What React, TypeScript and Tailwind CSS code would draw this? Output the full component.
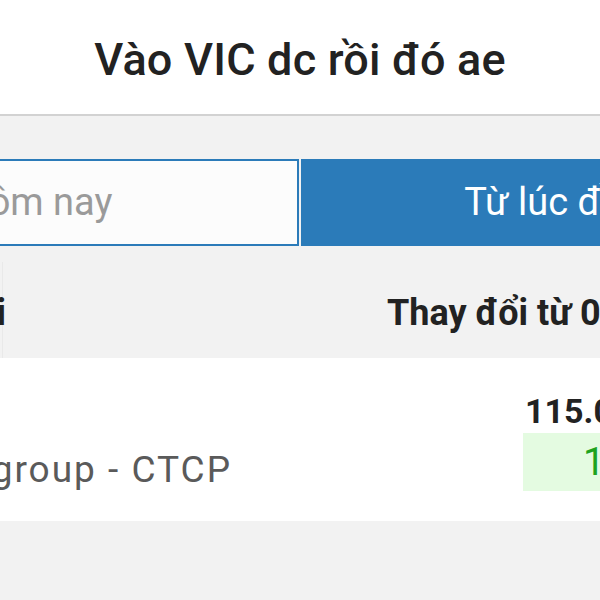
export default function App() {
  return (
    <div className="w-[600px] h-[600px] overflow-hidden bg-[#f2f2f2] font-['Roboto',sans-serif]">
      {/* Title bar */}
      <div className="h-[116px] box-border bg-white flex items-center justify-center border-b-2 border-[#d2d2d2] pt-[6px]">
        <h1 className="text-[45px] font-medium text-[#222] tracking-[0.2px] whitespace-nowrap">Vào VIC dc rồi đó ae</h1>
      </div>

      {/* Tabs */}
      <div className="pt-[43px]">
        <div className="flex -mx-[211px] gap-[2px] h-[87px]">
          <div className="flex-1 bg-[#fcfcfc] border-2 border-[#2b7bb9] flex items-center justify-center pr-[14px] text-[38px] text-[#9a9a9a] whitespace-nowrap">
            Hôm nay
          </div>
          <div className="flex-1 bg-[#2b7bb9] border-2 border-[#2b7bb9] flex items-center justify-center pl-[4px] pr-[10px] text-[38px] text-white whitespace-nowrap">
            Từ lúc đầu
          </div>
        </div>
      </div>

      {/* Table header */}
      <div className="mt-[16px] ml-[2px] border-l border-[#e9e9e9]">
        <div className="h-[96px] flex items-center justify-between pt-[6px] whitespace-nowrap">
          <div className="w-[3px] flex justify-end">
            <span className="text-[36px] font-bold text-[#222]">Hiện tại</span>
          </div>
          <span className="text-[36px] font-bold text-[#222] -mr-[76px]">Thay đổi từ 01/01</span>
        </div>
      </div>

      {/* Row */}
      <div className="h-[163px] bg-white flex">
        <div className="flex-1 flex justify-end items-end pb-[33px] pr-[291px] whitespace-nowrap overflow-hidden">
          <div className="flex flex-col items-start shrink-0">
            <span className="text-[34px] font-bold text-[#222] leading-none mb-[22px]">VIC</span>
            <span className="text-[37px] tracking-[2px] text-[#5a5a5a] leading-none">Tập đoàn Vingroup - CTCP</span>
          </div>
        </div>
        <div className="w-[77px] flex flex-col pt-[36px] whitespace-nowrap">
          <span className="text-[34px] font-bold text-[#222] leading-none pl-[2px]">115.000</span>
          <div className="mt-[5px] h-[58px] w-[160px] bg-[#e4fbe1] text-[#1ea31e] text-[39px] flex items-center pl-[60px]">
            12,5%
          </div>
        </div>
      </div>
    </div>
  );
}
